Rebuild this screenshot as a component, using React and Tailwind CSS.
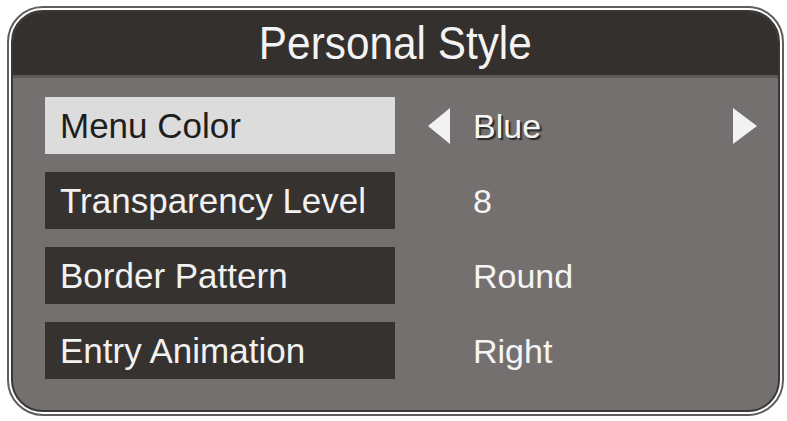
const rows = [
  { label: 'Menu Color', value: 'Blue', active: true },
  { label: 'Transparency Level', value: '8' },
  { label: 'Border Pattern', value: 'Round' },
  { label: 'Entry Animation', value: 'Right' },
]

function LeftArrow({ hidden }) {
  return (
    <svg className={`w-[24px] h-[38px] shrink-0 ${hidden ? 'invisible' : ''}`} viewBox="0 0 24 38">
      <polygon points="23,1 23,37 1,19" fill="#f2f2f2" />
    </svg>
  )
}

function RightArrow({ hidden }) {
  return (
    <svg className={`w-[26px] h-[38px] shrink-0 ${hidden ? 'invisible' : ''}`} viewBox="0 0 26 38">
      <polygon points="1,1 1,37 25,19" fill="#f2f2f2" />
    </svg>
  )
}

function Row({ label, value, active }) {
  return (
    <div className="flex items-center h-[57px]">
      <div
        className={`w-[350px] h-full flex items-center pl-[15px] text-[35px] leading-none ${
          active ? 'bg-[#dcdcdc] text-[#1e1e1e]' : 'bg-[#36322f] text-[#f1f1f1]'
        }`}
      >
        {label}
      </div>
      <div className="flex-1 flex items-center ml-[32px] mr-[20px]">
        <LeftArrow hidden={!active} />
        <span
          className={`ml-[22px] text-[34px] leading-none text-[#f5f5f5] ${
            active ? '[text-shadow:2px_2px_1px_#2a2727]' : ''
          }`}
        >
          {value}
        </span>
        <div className="ml-auto">
          <RightArrow hidden={!active} />
        </div>
      </div>
    </div>
  )
}

export default function App() {
  return (
    <div className="w-[787px] h-[421px] bg-white pt-[6px] pl-[7px] pr-[3px] pb-[5px] font-['Liberation_Sans',Arial,sans-serif]">
      <div className="h-full rounded-[36px] border-2 border-[#5e5e5e] bg-white p-[2px]">
        <div className="h-full rounded-[32px] border-2 border-[#3a3735] overflow-hidden flex flex-col bg-[#74706f]">
          {/* title bar */}
          <div className="h-[63px] bg-[#34302e] flex items-center justify-center">
            <span className="inline-block text-[46px] leading-none text-[#f3f3f3] scale-x-[0.92] -mt-[2px]">
              Personal Style
            </span>
          </div>
          <div className="h-[3px] bg-[#5c5957]" />

          <div className="flex flex-col gap-[18px] pt-[19px] pl-[32px]">
            {rows.map((r) => (
              <Row key={r.label} {...r} />
            ))}
          </div>
        </div>
      </div>
    </div>
  )
}
